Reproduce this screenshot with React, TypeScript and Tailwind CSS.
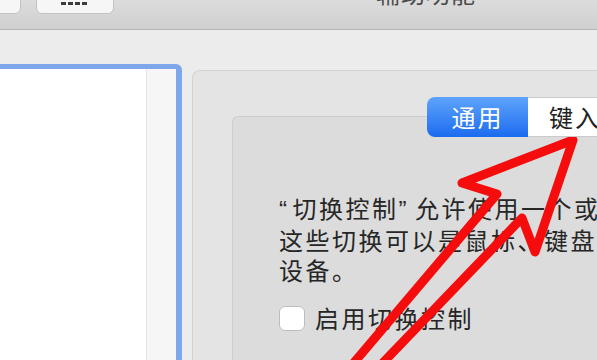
export default function App() {
  const font = { fontFamily: '"Noto Sans CJK SC", "Noto Sans", sans-serif' };
  return (
    <div style={font} className="relative w-[597px] h-[360px] overflow-hidden bg-[#ececec] text-[#262626]">
      {/* title bar */}
      <div className="flex items-start h-[30px] bg-gradient-to-b from-[#dcdcdc] to-[#cfcfcf] border-b border-[#b3b3b3]">
        <div className="shrink-0 -ml-[12px] -mt-[12px] w-[33px] h-[26px] rounded-[6px] bg-[#f6f6f6] border border-[#c2c2c2]" />
        <div className="shrink-0 ml-[15px] -mt-[12px] w-[78px] h-[26px] rounded-[6px] bg-[#f6f6f6] border border-[#c2c2c2] flex items-end pb-[8px] pl-[24px] gap-[2px]">
          <span className="w-[5px] h-[3px] bg-[#3c3c3c]" />
          <span className="w-[5px] h-[3px] bg-[#3c3c3c]" />
          <span className="w-[5px] h-[3px] bg-[#3c3c3c]" />
          <span className="w-[5px] h-[3px] bg-[#3c3c3c]" />
        </div>
        <div className="shrink-0 ml-[262px] -mt-[19px] text-[24px] leading-[24px] tracking-[1px] text-[#4a4a4a]">辅助功能</div>
      </div>

      {/* main area */}
      <div className="flex items-start">
        <div className="shrink-0 -ml-[10px] mt-[34px] w-[192px] h-[320px] border-[5px] border-r-[6px] border-b-0 border-[#7ea6ea] rounded-tr-[6px] flex">
          <div className="flex-1 bg-white" />
          <div className="w-[30px] bg-[#f6f6f6] border-l border-[#e4e4e4]" />
        </div>

        <div className="min-w-0 ml-[10px] mt-[40px] flex-1 h-[300px] overflow-hidden bg-[#e4e4e4] border border-r-0 border-[#d2d2d2] rounded-tl-[8px] pt-[26px]">
          <div className="relative z-10 ml-[234px] flex h-[40px] text-[24px] tracking-[2px]">
            <div className="shrink-0 w-[101px] rounded-l-[8px] bg-gradient-to-b from-[#5ea3fb] to-[#1a6bf0] text-white flex items-center justify-center">
              通用
            </div>
            <div className="shrink-0 w-[100px] bg-white border-y border-[#cacaca] flex items-center pl-[21px] text-[#222]">
              键入
            </div>
          </div>
          <div className="-mt-[21px] ml-[39px] h-[300px] bg-[#dcdcdc] border border-r-0 border-[#cdcdcd] rounded-tl-[6px] pt-[76px] pl-[46px] whitespace-nowrap">
            <p className="text-[24px] leading-[30px] tracking-[2.5px]">
              <span className="font-['Liberation_Sans'] mr-[3px]">“</span>切换控制<span className="font-['Liberation_Sans'] mr-[6px]">”</span>允许使用一个或多个
              <br />
              这些切换可以是鼠标、键盘或其他
              <br />
              设备。
            </p>
            <div className="mt-[18px] flex items-center gap-[10px]">
              <div className="shrink-0 w-[26px] h-[25px] rounded-[6px] bg-white border border-[#bdbdbd]" />
              <span className="text-[24px] leading-[30px] tracking-[2.5px]">启用切换控制</span>
            </div>
          </div>
        </div>
      </div>

      {/* red annotation arrow */}
      <svg className="absolute inset-0 pointer-events-none" width="597" height="360" viewBox="0 0 597 360">
        <polygon
          points="573,140 462,183 497,194 346,372 374,372 522,218 535,252"
          fill="none"
          stroke="#f50c0c"
          strokeWidth="9"
          strokeLinejoin="round"
        />
      </svg>
    </div>
  );
}
